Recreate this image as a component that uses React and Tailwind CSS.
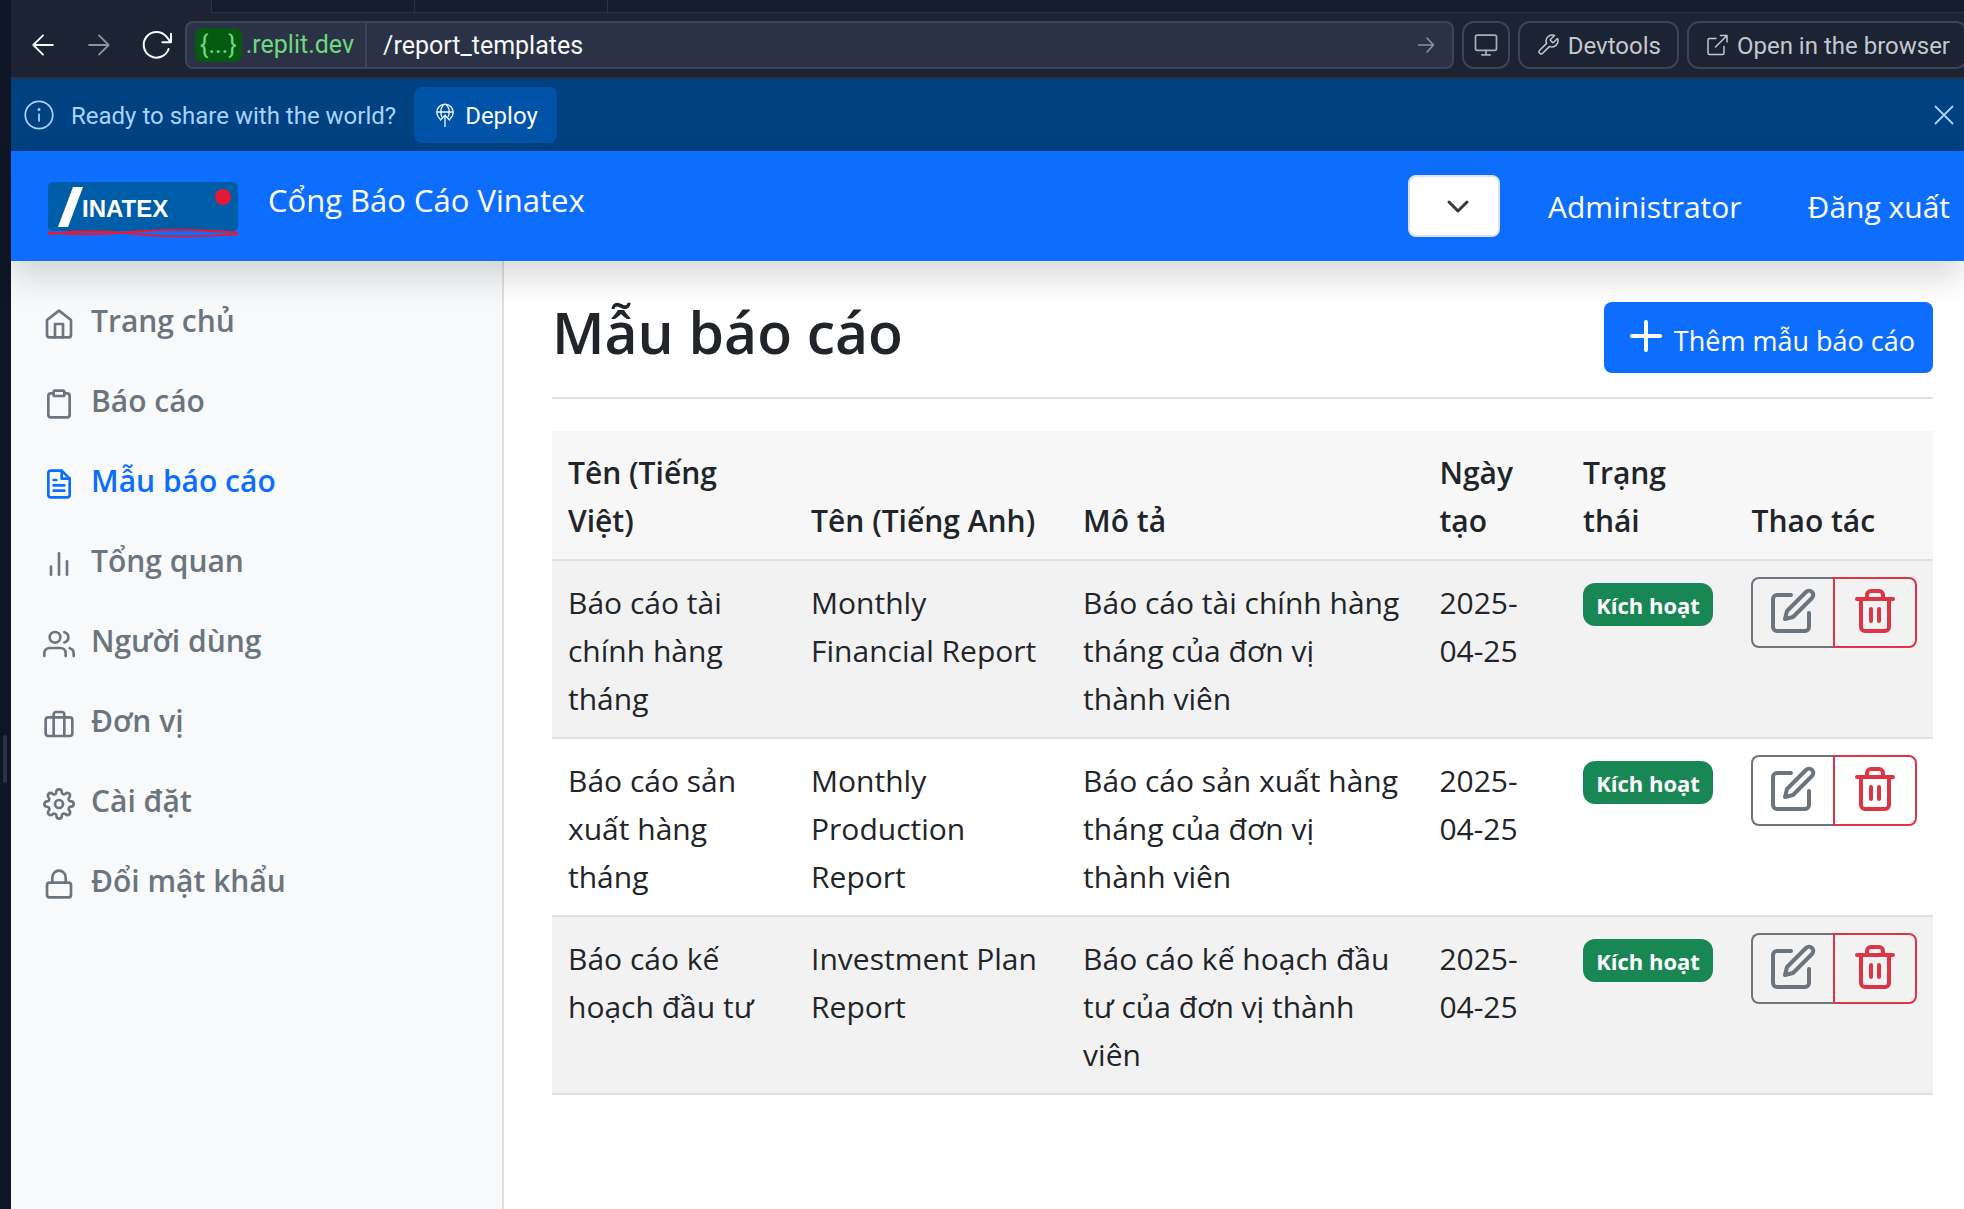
import {
  FiHome,
  FiClipboard,
  FiFileText,
  FiBarChart2,
  FiUsers,
  FiBriefcase,
  FiSettings,
  FiLock,
  FiEdit,
  FiTrash2,
  FiPlus,
} from "react-icons/fi";

const navItems = [
  { label: "Trang chủ", icon: FiHome },
  { label: "Báo cáo", icon: FiClipboard },
  { label: "Mẫu báo cáo", icon: FiFileText, active: true },
  { label: "Tổng quan", icon: FiBarChart2 },
  { label: "Người dùng", icon: FiUsers },
  { label: "Đơn vị", icon: FiBriefcase },
  { label: "Cài đặt", icon: FiSettings },
  { label: "Đổi mật khẩu", icon: FiLock },
];

const columns = [
  { label: "Tên (Tiếng Việt)", width: "w-[17.6%]" },
  { label: "Tên (Tiếng Anh)", width: "w-[19.7%]" },
  { label: "Mô tả", width: "w-[25.8%]" },
  { label: "Ngày tạo", width: "w-[10.4%]" },
  { label: "Trạng thái", width: "w-[12.2%]" },
  { label: "Thao tác", width: "w-[14.3%]" },
];

const templates = [
  {
    vi: "Báo cáo tài chính hàng tháng",
    en: "Monthly Financial Report",
    description: "Báo cáo tài chính hàng tháng của đơn vị thành viên",
    date: "2025-04-25",
  },
  {
    vi: "Báo cáo sản xuất hàng tháng",
    en: "Monthly Production Report",
    description: "Báo cáo sản xuất hàng tháng của đơn vị thành viên",
    date: "2025-04-25",
  },
  {
    vi: "Báo cáo kế hoạch đầu tư",
    en: "Investment Plan Report",
    description: "Báo cáo kế hoạch đầu tư của đơn vị thành viên",
    date: "2025-04-25",
  },
];

function Line({ className, viewBox = "0 0 24 24", width = 1.5, children }) {
  return (
    <svg
      className={className}
      viewBox={viewBox}
      fill="none"
      stroke="currentColor"
      strokeWidth={width}
      strokeLinecap="round"
      strokeLinejoin="round"
      aria-hidden="true"
    >
      {children}
    </svg>
  );
}

function TabStrip() {
  return (
    <div className="flex h-[13px] bg-[#171d2d]">
      <div className="w-[200px] bg-[#1c2333]" />
      <div className="w-[204px] border-x border-b border-[#2b3245]" />
      <div className="w-[193px] border-r border-b border-[#2b3245]" />
      <div className="flex-1 border-b border-[#2b3245]" />
    </div>
  );
}

function AddressBar() {
  return (
    <div className="flex h-12 min-w-0 flex-1 items-center rounded-lg border-2 border-[#3c445c] bg-[#2b3245] text-[25px]">
      <button type="button" className="flex h-full items-center border-r-2 border-[#3c445c] px-2 text-[#6cd97e]">
        <span className="mr-1 flex h-[34px] items-center rounded-lg bg-[#045a10] px-[5px]">{"{...}"}</span>
        <span className="pr-[3px]">.replit.dev</span>
      </button>
      <input
        aria-label="Path"
        defaultValue="/report_templates"
        className="h-full min-w-0 flex-1 bg-transparent px-4 text-[#f5f9fc] outline-none"
      />
      <button type="button" aria-label="Go" className="pr-4 text-[#8d929c]">
        <Line className="size-5" viewBox="0 0 20 20" width={1.6}>
          <path d="M2.500 10h15M11 3l6.500 7-6.500 7" />
        </Line>
      </button>
    </div>
  );
}

function Toolbar() {
  return (
    <div className="flex h-[66px] items-center gap-2 overflow-hidden border-b-2 border-[#2b3245] bg-[#1c2333] pl-[18px] text-[#c2c8cc]">
      <div className="mr-1 flex items-center gap-7">
        <button type="button" aria-label="Back" className="text-[#f5f9fc]">
          <Line className="size-7" width={1.6}>
            <path d="M20.500 12H4M12 3.800 3.700 12l8.300 8.200" />
          </Line>
        </button>
        <button type="button" aria-label="Forward" className="text-[#8d929c]">
          <Line className="size-7" width={1.6}>
            <path d="M3.500 12H20M12 3.800l8.300 8.200-8.300 8.200" />
          </Line>
        </button>
        <button type="button" aria-label="Reload" className="text-[#f5f9fc]">
          <Line className="size-8" width={1.5}>
            <path d="M22.500 3.500v6.500h-6.500M22.300 9.800l-3.200-4A9.600 9.600 0 1 0 20.700 15" />
          </Line>
        </button>
      </div>
      <AddressBar />
      <button
        type="button"
        aria-label="Device size"
        className="flex h-12 w-12 shrink-0 items-center justify-center rounded-xl border-2 border-[#3c445c]"
      >
        <Line className="size-7 text-[#a9aeb6]">
          <rect x="3" y="3.500" width="18" height="13" rx="1.500" />
          <path d="M12 16.500v4M8.500 20.500h7" />
        </Line>
      </button>
      <button
        type="button"
        className="flex h-12 shrink-0 items-center gap-2 rounded-xl border-2 border-[#3c445c] px-4 text-2xl"
      >
        <Line className="size-6">
          <path d="M14.700 6.300a1 1 0 0 0 0 1.400l1.600 1.600a1 1 0 0 0 1.400 0l3.800-3.800a6 6 0 0 1-7.900 7.900l-6.900 6.900a2.100 2.100 0 0 1-3-3l6.900-6.900a6 6 0 0 1 7.900-7.900z" />
        </Line>
        <span className="pt-0.5">Devtools</span>
      </button>
      <button
        type="button"
        className="-mr-1 flex h-12 shrink-0 items-center gap-2 rounded-xl border-2 border-[#3c445c] px-4 text-2xl"
      >
        <Line className="size-6">
          <path d="M19 13.500V20a1.500 1.500 0 0 1-1.500 1.500h-13A1.500 1.500 0 0 1 3 20V7a1.500 1.500 0 0 1 1.500-1.500H11M15.500 2.500H22V9M22 2.500 10.500 14" />
        </Line>
        <span className="pt-0.5">Open in the browser</span>
      </button>
    </div>
  );
}

function DeployBanner() {
  return (
    <div className="flex h-[72px] items-center bg-[#004182] pr-[10px] pl-3 text-2xl text-[#a8d3ff]">
      <Line className="size-8" width={1.3}>
        <circle cx="12" cy="12" r="10.300" />
        <path d="M12 11.500v5" />
        <circle cx="12" cy="7.900" r=".5" fill="currentColor" />
      </Line>
      <p className="ml-4 pt-0.5">Ready to share with the world?</p>
      <button
        type="button"
        className="ml-[18px] flex h-14 items-center gap-2 rounded-lg bg-[#0053a6] px-[19px] text-[#f5f9fc]"
      >
        <Line className="size-6" width={1.3}>
          <path d="M6.800 15.700a8.200 8.200 0 1 1 10.400 0M4 9h16M8.700 13.500C7 8.500 8 3.500 12 1c4 2.500 5 7.500 3.300 12.500M12 23.500V12M7.500 17 12 12.300l4.500 4.700" />
        </Line>
        <span className="pt-0.5">Deploy</span>
      </button>
      <button type="button" aria-label="Dismiss" className="ml-auto">
        <Line className="size-5" viewBox="0 0 20 20" width={1.8}>
          <path d="m1.500 1.500 17 17M18.500 1.500l-17 17" />
        </Line>
      </button>
    </div>
  );
}

function Logo() {
  return (
    <svg className="mt-2 h-14 w-[190px]" viewBox="0 0 190 56" role="img" aria-label="Vinatex">
      <rect width="190" height="49" rx="5" fill="#005ea8" />
      <path d="M25 5h10L20 45H10z" fill="#fff" />
      <text x="34" y="35" fill="#fff" fontFamily="Liberation Sans, Arial, sans-serif" fontSize="24" fontWeight="700">
        INATEX
      </text>
      <circle cx="175" cy="15" r="8" fill="#e31937" />
      <g fill="none" stroke="#e31937" strokeWidth="2">
        <path d="M0 50.500Q40 54 78 50.500T140 48T190 50.500" />
        <path d="M0 52Q40 47 78 51T140 54.500T190 52" />
      </g>
    </svg>
  );
}

function AppHeader() {
  return (
    <header className="relative z-10 flex h-[110px] items-center bg-[#0d6efd] pr-[14px] pl-[37px] text-[30px] text-white shadow-[0_16px_32px_rgba(0,0,0,0.15)]">
      <a href="#home" className="flex items-center gap-[30px]">
        <Logo />
        <span className="pb-3 text-[31px]">Cổng Báo Cáo Vinatex</span>
      </a>
      <div className="ml-auto flex items-center">
        <div className="relative">
          <select
            aria-label="Ngôn ngữ"
            className="block h-[62px] w-[92px] appearance-none rounded-lg border-2 border-[#dee2e6] bg-white"
          />
          <Line
            className="pointer-events-none absolute top-5 right-[30px] size-6 text-[#343a40]"
            width={3}
          >
            <path d="m3 7 9 9 9-9" />
          </Line>
        </div>
        <span className="ml-12">Administrator</span>
        <a href="#logout" className="ml-[66px]">
          Đăng xuất
        </a>
      </div>
    </header>
  );
}

function Sidebar() {
  return (
    <nav className="w-[493px] shrink-0 border-r-2 border-[#dfdfdf] bg-[#f8f9fa] pt-5 text-[30px] leading-[48px] font-semibold">
      {navItems.map(({ label, icon: Icon, active }) => (
        <a
          key={label}
          href="#nav"
          aria-current={active ? "page" : undefined}
          className={
            active
              ? "flex h-20 items-center gap-4 pl-8 text-[#0d6efd]"
              : "flex h-20 items-center gap-4 pl-8 text-[#6c757d]"
          }
        >
          <Icon className="mt-[6px] size-8" aria-hidden="true" />
          {label}
        </a>
      ))}
    </nav>
  );
}

function TemplateTable() {
  return (
    <table className="w-full table-fixed text-left text-[30px] leading-[48px]">
      <thead className="bg-[#f7f7f7]">
        <tr className="border-b-2 border-[#dee2e6]">
          {columns.map(({ label, width }) => (
            <th key={label} scope="col" className={`${width} px-4 pt-[18px] pb-[14px] align-bottom font-semibold`}>
              {label}
            </th>
          ))}
        </tr>
      </thead>
      <tbody>
        {templates.map((row) => (
          <tr key={row.vi} className="border-b-2 border-[#dee2e6] align-top odd:bg-[#f2f2f2]">
            <td className="px-4 pt-[18px] pb-[14px]">{row.vi}</td>
            <td className="px-4 pt-[18px] pb-[14px]">{row.en}</td>
            <td className="pt-[18px] pr-5 pb-[14px] pl-4">{row.description}</td>
            <td className="px-4 pt-[18px] pb-[14px]">{row.date}</td>
            <td className="px-4 pt-[22px]">
              <span className="flex h-[43px] w-[130px] items-center justify-center rounded-xl bg-[#198754] text-[22px] font-bold whitespace-nowrap text-white">
                Kích hoạt
              </span>
            </td>
            <td className="p-4">
              <div className="flex">
                <button
                  type="button"
                  aria-label="Sửa"
                  className="flex h-[71px] w-[82px] items-center justify-center rounded-l-lg border-2 border-r-0 border-[#6c757d] pb-1 text-[#6c757d]"
                >
                  <FiEdit className="size-12" />
                </button>
                <button
                  type="button"
                  aria-label="Xóa"
                  className="flex h-[71px] w-[84px] items-center justify-center rounded-r-lg border-2 border-[#dc3545] pb-1 text-[#dc3545]"
                >
                  <FiTrash2 className="size-12" />
                </button>
              </div>
            </td>
          </tr>
        ))}
      </tbody>
    </table>
  );
}

export default function App() {
  return (
    <div className="flex min-h-screen bg-white font-['Open_Sans','Noto_Sans',sans-serif] text-[#212529]">
      <div className="flex w-[11px] shrink-0 items-center bg-[#0e1525]">
        <div className="mt-[309px] ml-[3px] h-12 w-1 rounded-full bg-[#2b3245]" />
      </div>
      <div className="flex min-w-0 flex-1 flex-col">
        <div className="font-[Roboto,sans-serif]">
          <TabStrip />
          <Toolbar />
          <DeployBanner />
        </div>
        <AppHeader />
        <div className="flex flex-1">
          <Sidebar />
          <main className="min-w-0 flex-1 pt-[41px] pr-[31px] pl-12">
            <div className="flex items-start justify-between border-b-2 border-[#dee2e6] pb-6">
              <h1 className="text-[57px] leading-[60px] font-semibold">Mẫu báo cáo</h1>
              <button
                type="button"
                className="flex h-[71px] items-center gap-1 rounded-lg bg-[#0d6efd] px-[18px] text-[27px] text-white"
              >
                <FiPlus className="mb-1 size-12" aria-hidden="true" />
                <span className="pt-2">Thêm mẫu báo cáo</span>
              </button>
            </div>
            <div className="mt-8">
              <TemplateTable />
            </div>
          </main>
        </div>
      </div>
    </div>
  );
}
